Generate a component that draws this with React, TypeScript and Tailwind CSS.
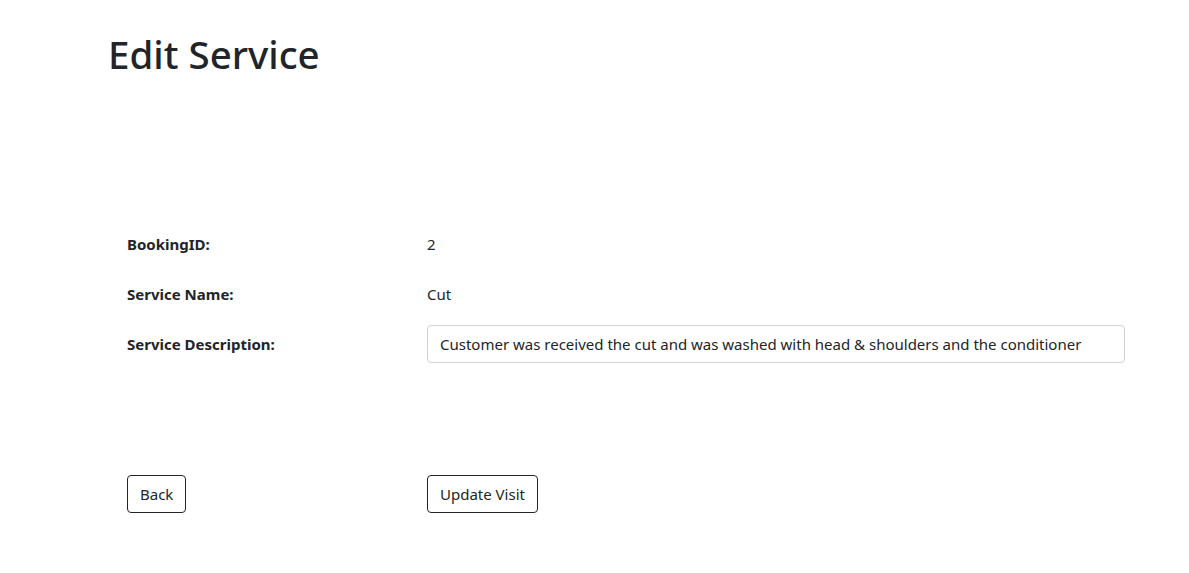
import React from "react";

const EditService: React.FC = () => {
  return (
    <div className="min-h-screen bg-white text-[#212529] font-['Noto_Sans',sans-serif] text-[15px]">
      <div className="pl-[108px] pt-[31px]">
        <h1 className="text-[38.5px] font-medium leading-[1.2]">Edit Service</h1>
      </div>

      <div className="pl-[127px] pt-[142px] pr-[64px]">
        <div className="flex items-center h-[50px]">
          <div className="w-[300px] font-bold">BookingID:</div>
          <div>2</div>
        </div>
        <div className="flex items-center h-[50px]">
          <div className="w-[300px] font-bold">Service Name:</div>
          <div>Cut</div>
        </div>
        <div className="flex items-center h-[50px]">
          <div className="w-[300px] font-bold">Service Description:</div>
          <input
            type="text"
            defaultValue="Customer was received the cut and was washed with head & shoulders and the conditioner"
            className="w-[698px] h-[38px] px-3 border border-[#ced4da] rounded-[4px] text-[#212529] outline-none"
          />
        </div>

        <div className="flex items-center pt-[106px]">
          <div className="w-[300px]">
            <button className="h-[38px] px-3 border border-[#212529] rounded-[4px] bg-white">
              Back
            </button>
          </div>
          <button className="h-[38px] px-3 border border-[#212529] rounded-[4px] bg-white">
            Update Visit
          </button>
        </div>
      </div>
    </div>
  );
};

export default function App() {
  return <EditService />;
}
